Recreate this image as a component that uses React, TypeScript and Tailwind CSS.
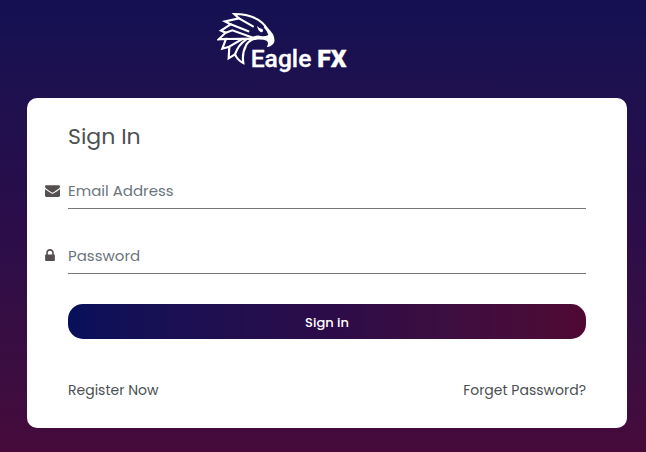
function Logo() {
  return (
    <svg viewBox="20 21 396 186" className="h-[62px] w-[132px]" role="img" aria-label="Eagle FX">
      <g fill="none" stroke="#fff" strokeWidth="6.500" strokeLinejoin="miter" strokeLinecap="round">
        <path d="M173 75 C156 46 128 27 72 27 L86 40 L44 49 L61 58 L32 77 L46 83 L25 103 L47 102 L36 131 L57 125 L55 160 L74 148 Q82 166 99 174 Q94 145 108 119 Q119 103 138 101 L47 102" />
        <path d="M86 40 L128 64 M61 58 L114 79 M46 83 L66 76 L130 99" />
        <path d="M57 125 L96 102 M74 148 Q83 120 108 103" />
      </g>
      <path fill="#fff" d="M164 62 Q181 75 188 88 Q195 103 191 113 Q184 125 169 126 Q177 114 169 107 Q159 102 132 104 L126 96 Q140 89 152 93 Q164 95 174 90 Q170 77 160 67Z" />
      <path fill="#fff" d="M140 63 Q147 71 157 73 Q160 83 152 82 Q143 77 140 63Z" />
      <g fill="#fff" stroke="#fff" fontFamily="Roboto, 'Open Sans', sans-serif" fontSize="74">
        <text x="121" y="187" fontWeight="500" strokeWidth="1">Eagle</text>
        <text x="321" y="187" fontWeight="900">FX</text>
      </g>
    </svg>
  );
}

function EnvelopeIcon() {
  return (
    <svg viewBox="0 0 1792 1792" className="ml-px size-[15px]" fill="currentColor" aria-hidden="true">
      <path d="M1792 710v794q0 66-47 113t-113 47h-1472q-66 0-113-47t-47-113v-794q44 49 101 87 362 246 497 345 57 42 92.500 65.500t94.500 48 110 24.500h2q51 0 110-24.500t94.500-48 92.500-65.500q170-123 498-345 57-39 100-87zm0-294q0 79-49 151t-122 123q-376 261-468 325-10 7-42.500 30.500t-54 38-52 32.500-57.500 27-50 9h-2q-23 0-50-9t-57.500-27-52-32.500-54-38-42.500-30.500q-91-64-262-182.500t-205-142.500q-62-42-117-115.500t-55-136.500q0-78 41.500-130t118.500-52h1472q65 0 112.500 47t47.500 113z" />
    </svg>
  );
}

function LockIcon() {
  return (
    <svg viewBox="0 0 1152 1536" className="ml-px h-[13px] w-[10px]" fill="currentColor" aria-hidden="true">
      <path d="M320 640h512V448q0-106-75-181t-181-75-181 75-75 181v192zm832 96v576q0 40-28 68t-68 28H96q-40 0-68-28t-28-68V736q0-40 28-68t68-28h32V448q0-184 132-316T576 0t316 132 132 316v192h32q40 0 68 28t28 68z" />
    </svg>
  );
}

export default function App() {
  return (
    <main className="min-h-screen bg-linear-to-b from-[#141152] via-[#2b0d4a] to-[#450a3a] pt-3 pr-[19px] pb-6 pl-[27px] font-[Poppins,Inter,sans-serif] text-[#4b5052]">
      <header className="flex justify-center pr-[88px]">
        <Logo />
      </header>
      <form className="mt-6 rounded-[10px] bg-white px-[41px] pt-6 pb-[26px]" onSubmit={(e) => e.preventDefault()}>
        <h1 className="text-[22px] leading-[30px]">Sign In</h1>
        <div className="mt-5 -ml-6 flex items-center">
          <label htmlFor="email" aria-label="Email Address" className="w-6 text-[#554f50]">
            <EnvelopeIcon />
          </label>
          <input id="email" type="email" placeholder="Email Address" className="h-[37px] min-w-0 flex-1 border-b border-[#777] text-[15px] outline-none placeholder:text-[#6c757d]" />
        </div>
        <div className="mt-7 -ml-6 flex items-center">
          <label htmlFor="password" aria-label="Password" className="w-6 text-[#554f50]">
            <LockIcon />
          </label>
          <input id="password" type="password" placeholder="Password" className="h-[37px] min-w-0 flex-1 border-b border-[#777] text-[15px] outline-none placeholder:text-[#6c757d]" />
        </div>
        <button type="submit" className="mt-[30px] h-[35px] w-full rounded-[15px] bg-linear-to-r from-[#07105a] via-[#2c0b49] to-[#500834] pt-0.5 text-[13px] font-medium text-white">
          Sign in
        </button>
        <nav className="mt-[39px] flex justify-between text-sm leading-6">
          <a href="#register">Register Now</a>
          <a href="#forgot">Forget Password?</a>
        </nav>
      </form>
    </main>
  );
}
